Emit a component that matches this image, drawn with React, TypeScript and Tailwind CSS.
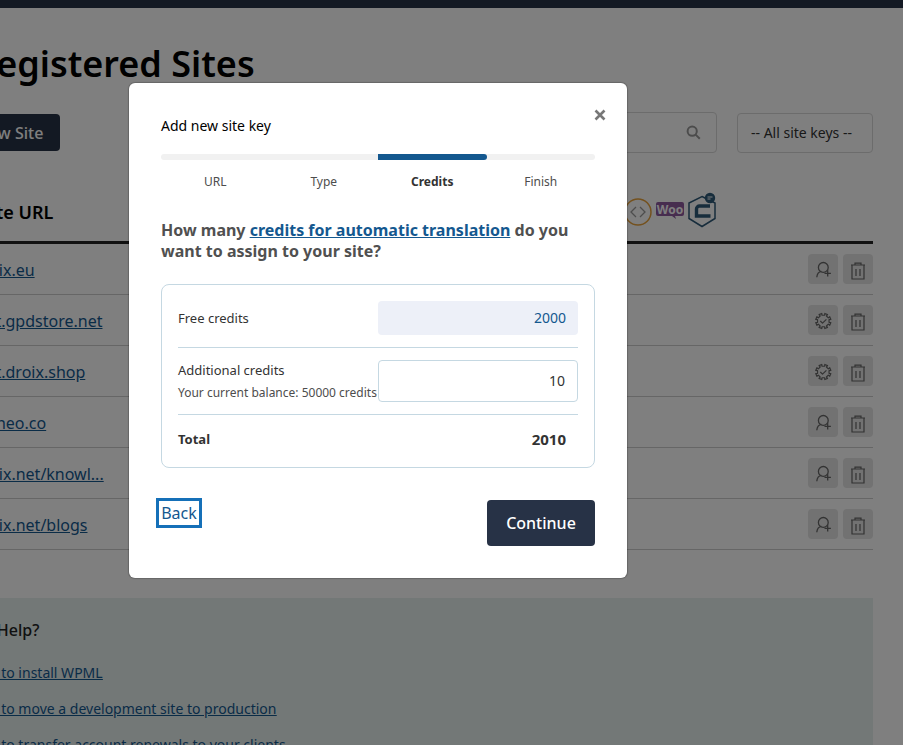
import { ReactNode } from 'react';

const sites = [
  { url: 'droix.eu', icon: 'user' },
  { url: 'test.gpdstore.net', icon: 'gear' },
  { url: 'test.droix.shop', icon: 'gear' },
  { url: 'dianeo.co', icon: 'user' },
  { url: 'droix.net/knowl...', icon: 'user' },
  { url: 'droix.net/blogs', icon: 'user' },
];

const steps = ['URL', 'Type', 'Credits', 'Finish'];

function UserPlusIcon() {
  return (
    <svg width="30" height="30" viewBox="0 0 30 30" fill="none" stroke="#666666" strokeWidth="1.3">
      <circle cx="15.3" cy="13.4" r="4.9" />
      <path d="M8.8 23.2c.3-3.6 2.4-5.6 4.6-5.9M16.5 19.3h6.4M19.7 16.2v6.4" />
    </svg>
  );
}

function gearPath() {
  const points: string[] = [];
  for (let i = 0; i < 8; i++) {
    const a = (i / 8) * Math.PI * 2 - Math.PI / 8;
    const step = Math.PI / 8;
    const p = (r: number, t: number) => `${(15.3 + r * Math.cos(t)).toFixed(2)} ${(16 + r * Math.sin(t)).toFixed(2)}`;
    points.push(`${i === 0 ? 'M' : 'L'}${p(5.9, a - step * 0.42)}`);
    points.push(`L${p(7.7, a - step * 0.5)}`);
    points.push(`L${p(7.7, a + step * 0.5)}`);
    points.push(`L${p(5.9, a + step * 0.42)}`);
  }
  return points.join(' ') + ' Z';
}

function GearIcon() {
  return (
    <svg width="30" height="30" viewBox="0 0 30 30" fill="none" stroke="#666666" strokeWidth="1.2" strokeLinejoin="round">
      <path d={gearPath()} />
      <path d="M12.3 16l2.2 2.2 3.9-3.9" />
    </svg>
  );
}

function TrashIcon() {
  return (
    <svg width="30" height="30" viewBox="0 0 30 30" fill="none" stroke="#666666" strokeWidth="1.2">
      <path d="M8 11h14M12 11V9.2h6V11M9 11v14h12V11M13 15v7M17 15v7" />
    </svg>
  );
}

function IconButton({ children }: { children: ReactNode }) {
  return <button className="flex h-[30px] w-[30px] items-center justify-center rounded bg-[#e4e4e4]">{children}</button>;
}

function PluginLogos() {
  return (
    <div className="mr-[157px] flex items-center gap-[4px]">
      <svg width="28" height="28" viewBox="0 0 28 28" fill="none" className="mt-[2px]">
        <circle cx="14" cy="14" r="13" stroke="#e8a33d" strokeWidth="1.5" />
        <path d="M12 9l-5 5 5 5M16 9l5 5-5 5" stroke="#9a9a9a" strokeWidth="1.3" />
      </svg>
      <svg width="28" height="18" viewBox="0 0 28 18">
        <path d="M2 0h24a2 2 0 0 1 2 2v10a2 2 0 0 1-2 2h-7l1 3-4-3H2a2 2 0 0 1-2-2V2a2 2 0 0 1 2-2z" fill="#8f5a9f" />
        <text x="14" y="11.5" textAnchor="middle" fontSize="12" fontWeight="700" fontFamily="Noto Sans" fill="#ffffff">Woo</text>
      </svg>
      <svg width="28" height="36" viewBox="0 0 28 36" fill="none" className="-mt-[1px]">
        <path d="M14 4.5l13 6.5v15.5l-13 8-13-8V11z" stroke="#2f5a78" strokeWidth="1.5" fill="none" />
        <path d="M22 14h-10.5a3 3 0 0 0-3 3v7h14" stroke="#2f5a78" strokeWidth="3.4" fill="none" />
        <circle cx="22" cy="6" r="5.2" fill="#2f5a78" />
        <path d="M19.5 5h5M19.5 7h3" stroke="#ffffff" strokeWidth="1" />
      </svg>
    </div>
  );
}

function SitesPage() {
  return (
    <div className="-ml-[27px] w-[900px]">
      <h1 className="mt-[33px] text-[36px] leading-[46px] font-semibold text-black">Registered Sites</h1>
      <div className="mt-[25px] flex items-center gap-5">
        <button className="h-[37px] w-[87px] rounded bg-[#273246] pr-[13px] text-base font-medium text-white">New Site</button>
        <div className="ml-auto flex h-[41px] w-[400px] items-center justify-end rounded border border-[#d8d8d8] pr-[15px]">
          <svg width="15" height="15" viewBox="0 0 15 15" fill="none" stroke="#999999" strokeWidth="2">
            <circle cx="6.2" cy="6.2" r="4.6" />
            <path d="M9.6 9.6l4.2 4.2" />
          </svg>
        </div>
        <div className="flex h-10 w-[136px] items-center rounded border border-[#d8d8d8] pl-[13px] text-sm text-[#333333]">-- All site keys --</div>
      </div>
      <div className="mt-[36px] flex h-[55px] items-center justify-between border-b-[3px] border-[#222222] pb-[9px]">
        <div className="mt-[4px] ml-[8px] text-[18px] font-semibold text-black">Site URL</div>
        <PluginLogos />
      </div>
      {sites.map((site) => (
        <div key={site.url} className="flex h-[51px] items-center justify-between border-b border-[#cccccc]">
          <a className="pt-[2px] text-base text-[#14588f] underline">{site.url}</a>
          <div className="flex gap-[5px]">
            <IconButton>{site.icon === 'user' ? <UserPlusIcon /> : <GearIcon />}</IconButton>
            <IconButton>
              <TrashIcon />
            </IconButton>
          </div>
        </div>
      ))}
      <div className="mt-[48px] bg-[#e6f0ef] pt-[21px]">
        <div className="-ml-[21px] text-base leading-[22px] font-medium text-[#222222]">Need Help?</div>
        <div className="mt-[21px] -ml-[5px] flex flex-col gap-[14px] text-sm leading-[22px] text-[#14588f] underline">
          <a>How to install WPML</a>
          <a>How to move a development site to production</a>
          <a>How to transfer account renewals to your clients</a>
        </div>
      </div>
    </div>
  );
}

function CreditsDialog() {
  return (
    <div className="absolute inset-0 bg-black/50 pt-[83px] pl-[129px]">
      <div className="h-[495px] w-[498px] rounded-md bg-white px-8 pt-[32px] shadow-[0_0_1px_1px_rgba(0,0,0,0.2)]">
        <div className="flex h-[22px] items-center justify-between text-sm text-black">
          <span>Add new site key</span>
        </div>
        <svg className="absolute top-[109px] left-[594px]" width="12" height="12" viewBox="0 0 12 12" stroke="#777777" strokeWidth="2.6">
          <path d="M1.5 1.5l9 9M10.5 1.5l-9 9" />
        </svg>
        <div className="mt-[17px] flex h-[6px] rounded-full bg-[#f1f1f1]">
          <div className="ml-[217px] h-[6px] w-[109px] rounded-r-full bg-[#14588f]" />
        </div>
        <div className="mt-[12px] grid grid-cols-4 text-center text-xs leading-[20px] text-[#4d4d4d]">
          {steps.map((step) => (
            <div key={step} className={step === 'Credits' ? 'font-bold text-[#333333]' : ''}>
              {step}
            </div>
          ))}
        </div>
        <p className="mt-[28px] text-base leading-[21px] font-bold text-[#505050]">
          How many <a className="text-[#14588f] underline">credits for automatic translation</a> do you want to assign to your site?
        </p>
        <div className="mt-[22px] h-[184px] rounded-lg border border-[#c5d8e2] px-4 text-[#333333]">
          <div className="flex items-center justify-between border-b border-[#c5d8e2] pt-4 pb-3">
            <span className="pt-[2px] text-[13px]">Free credits</span>
            <div className="flex h-[34px] w-[200px] items-center justify-end rounded bg-[#edf0f8] px-3 text-sm text-[#14588f]">2000</div>
          </div>
          <div className="flex items-center justify-between border-b border-[#c5d8e2] py-3">
            <div>
              <div className="-mt-[1px] text-[13px] leading-[20px]">Additional credits</div>
              <div className="mt-[4px] text-xs leading-[18px] whitespace-nowrap text-[#4d4d4d]">Your current balance: 50000 credits</div>
            </div>
            <div className="flex h-[42px] w-[200px] shrink-0 items-center justify-end rounded border border-[#c5d8e2] px-3 text-sm">10</div>
          </div>
          <div className="flex h-[49px] items-center justify-between">
            <span className="text-[13px] font-bold">Total</span>
            <span className="pr-3 text-[15px] font-bold">2010</span>
          </div>
        </div>
        <div className="mt-[32px] flex items-start justify-between">
          <a className="-mt-[2px] -ml-[5px] flex h-[30px] w-[46px] items-center justify-center border-[3px] border-[#1570b8] text-base text-[#14588f]">Back</a>
          <button className="h-[46px] w-[108px] rounded bg-[#273246] text-base font-medium text-white">Continue</button>
        </div>
      </div>
    </div>
  );
}

export default function App() {
  return (
    <div className="relative h-[745px] w-[903px] overflow-hidden bg-white font-['Noto_Sans',sans-serif]">
      <div className="h-2 bg-[#273246]" />
      <SitesPage />
      <CreditsDialog />
    </div>
  );
}
